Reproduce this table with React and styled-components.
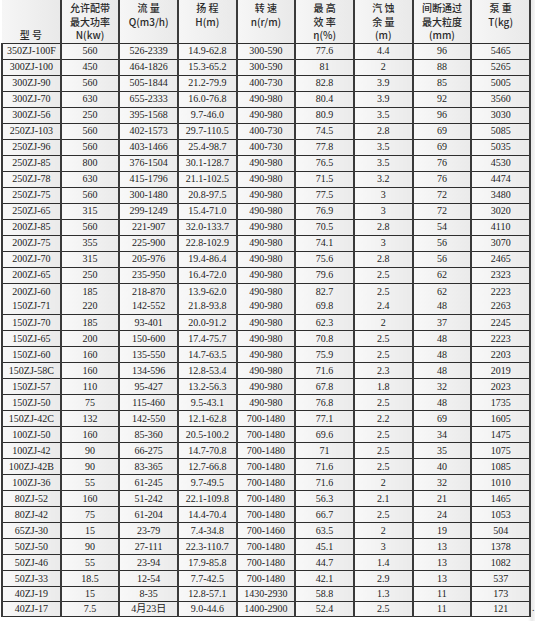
import React from 'react'
import styled, { createGlobalStyle } from 'styled-components'

const heads = [
  ['型 号'],
  ['允许配带', '最大功率', 'N(kw)'],
  ['流 量', 'Q(m3/h)'],
  ['扬 程', 'H(m)'],
  ['转 速', 'n(r/m)'],
  ['最 高', '效 率', 'η(%)'],
  ['汽 蚀', '余 量', '(m)'],
  ['间断通过', '最大粒度', '(mm)'],
  ['泵 重', 'T(kg)'],
];

const rows = [
  ['350ZJ-100F', '560', '526-2339', '14.9-62.8', '300-590', '77.6', '4.4', '96', '5465'],
  ['300ZJ-100', '450', '464-1826', '15.3-65.2', '300-590', '81', '2', '88', '5265'],
  ['300ZJ-90', '560', '505-1844', '21.2-79.9', '400-730', '82.8', '3.9', '85', '5005'],
  ['300ZJ-70', '630', '655-2333', '16.0-76.8', '490-980', '80.4', '3.9', '92', '3560'],
  ['300ZJ-56', '250', '395-1568', '9.7-46.0', '490-980', '80.9', '3.5', '96', '3030'],
  ['250ZJ-103', '560', '402-1573', '29.7-110.5', '400-730', '74.5', '2.8', '69', '5085'],
  ['250ZJ-96', '560', '403-1466', '25.4-98.7', '400-730', '77.8', '3.5', '69', '5035'],
  ['250ZJ-85', '800', '376-1504', '30.1-128.7', '490-980', '76.5', '3.5', '76', '4530'],
  ['250ZJ-78', '630', '415-1796', '21.1-102.5', '490-980', '71.5', '3.2', '76', '4474'],
  ['250ZJ-75', '560', '300-1480', '20.8-97.5', '490-980', '77.5', '3', '72', '3480'],
  ['250ZJ-65', '315', '299-1249', '15.4-71.0', '490-980', '76.9', '3', '72', '3020'],
  ['200ZJ-85', '560', '221-907', '32.0-133.7', '490-980', '70.5', '2.8', '54', '4110'],
  ['200ZJ-75', '355', '225-900', '22.8-102.9', '490-980', '74.1', '3', '56', '3070'],
  ['200ZJ-70', '315', '205-976', '19.4-86.4', '490-980', '75.6', '2.8', '56', '2465'],
  ['200ZJ-65', '250', '235-950', '16.4-72.0', '490-980', '79.6', '2.5', '62', '2323'],
  ['200ZJ-60\n150ZJ-71', '185\n220', '218-870\n142-552', '13.9-62.0\n21.8-93.8', '490-980\n490-980', '82.7\n69.8', '2.5\n2.4', '62\n48', '2223\n2263'],
  ['150ZJ-70', '185', '93-401', '20.0-91.2', '490-980', '62.3', '2', '37', '2245'],
  ['150ZJ-65', '200', '150-600', '17.4-75.7', '490-980', '70.8', '2.5', '48', '2223'],
  ['150ZJ-60', '160', '135-550', '14.7-63.5', '490-980', '75.9', '2.5', '48', '2203'],
  ['150ZJ-58C', '160', '134-596', '12.8-53.4', '490-980', '71.6', '2.3', '48', '2019'],
  ['150ZJ-57', '110', '95-427', '13.2-56.3', '490-980', '67.8', '1.8', '32', '2023'],
  ['150ZJ-50', '75', '115-460', '9.5-43.1', '490-980', '76.8', '2.5', '48', '1735'],
  ['150ZJ-42C', '132', '142-550', '12.1-62.8', '700-1480', '77.1', '2.2', '69', '1605'],
  ['100ZJ-50', '160', '85-360', '20.5-100.2', '700-1480', '69.6', '2.5', '34', '1475'],
  ['100ZJ-42', '90', '66-275', '14.7-70.8', '700-1480', '71', '2.5', '35', '1075'],
  ['100ZJ-42B', '90', '83-365', '12.7-66.8', '700-1480', '71.6', '2.5', '40', '1085'],
  ['100ZJ-36', '55', '61-245', '9.7-49.5', '700-1480', '71.6', '2', '32', '1010'],
  ['80ZJ-52', '160', '51-242', '22.1-109.8', '700-1480', '56.3', '2.1', '21', '1465'],
  ['80ZJ-42', '75', '61-204', '14.4-70.4', '700-1480', '66.7', '2.5', '24', '1053'],
  ['65ZJ-30', '15', '23-79', '7.4-34.8', '700-1460', '63.5', '2', '19', '504'],
  ['50ZJ-50', '90', '27-111', '22.3-110.7', '700-1480', '45.1', '3', '13', '1378'],
  ['50ZJ-46', '55', '23-94', '17.9-85.8', '700-1480', '44.7', '1.4', '13', '1082'],
  ['50ZJ-33', '18.5', '12-54', '7.7-42.5', '700-1480', '42.1', '2.9', '13', '537'],
  ['40ZJ-19', '15', '8-35', '12.8-57.1', '1430-2930', '58.8', '1.3', '11', '173'],
  ['40ZJ-17', '7.5', '4月23日', '9.0-44.6', '1400-2900', '52.4', '2.5', '11', '121'],
];

const rowHeight = (r, i) => {
  if (r[0].includes('\n')) return 30.5;
  if (i >= rows.length - 2) return 12.5;
  return 15;
};

export default function App() {
  return (
    <>
      <GlobalStyle />
      <Page>
        <Table>
          <thead>
            <tr>
              {heads.map((h, i) => (
                <HeadCell key={i} $first={i === 0}>
                  {h.map((line, j) => <div key={j}>{line}</div>)}
                </HeadCell>
              ))}
            </tr>
          </thead>
          <tbody>
            {rows.map((r, i) => (
              <Row key={i} $h={rowHeight(r, i)}>
                {r.map((v, j) => <Cell key={j}>{v}</Cell>)}
              </Row>
            ))}
          </tbody>
        </Table>
        <Dot>.</Dot>
      </Page>
    </>
  )
}

const GlobalStyle = createGlobalStyle`
  html, body {
    margin: 0;
    padding: 0;
    background: #fff;
  }
  body {
    width: 535px;
    height: 621px;
    overflow: hidden;
    font-family: "Liberation Serif", "Noto Sans CJK SC", serif;
  }
`;

const Page = styled.div`
  display: flex;
  align-items: flex-start;
  width: 535px;
  height: 621px;
  background: linear-gradient(to right, #fff 0, #fff 528px, #e9e9e9 532px, #f6f6f6 535px);
`;

const Table = styled.table`
  border-collapse: collapse;
  table-layout: fixed;
  width: 530px;
  margin: 0 0 0 1px;
  color: #1c1c1c;
`;

const HeadCell = styled.th`
  height: 40px;
  padding: 1px 0 1px;
  vertical-align: ${p => (p.$first ? 'bottom' : 'top')};
  font-family: "Noto Sans CJK SC", sans-serif;
  font-size: 10px;
  font-weight: 500;
  line-height: 13.5px;
  color: #2b2b2b;
  border-left: ${p => (p.$first ? 'none' : '2px solid #3a3a3a')};
  border-right: 2px solid #3a3a3a;
  border-bottom: 1px solid #2e2e2e;
  background: linear-gradient(to right, #f6f6f6, #e9e9e9);
`;

const Row = styled.tr`
  td {
    height: ${p => p.$h}px;
  }
`;

const Cell = styled.td`
  padding: 0;
  text-align: center;
  vertical-align: middle;
  font-size: 10px;
  line-height: 14px;
  white-space: pre-line;
  border-top: 1px solid #2e2e2e;
  border-bottom: 1px solid #2e2e2e;
  border-left: 2px solid #3a3a3a;
  border-right: 2px solid #3a3a3a;
  background: linear-gradient(to right, #f8f8f8, #eaeaea);
  overflow: hidden;
`;

const Dot = styled.span`
  align-self: flex-end;
  font-size: 10px;
  line-height: 10px;
  margin: 0 0 8px 1px;
  color: #333;
`;
